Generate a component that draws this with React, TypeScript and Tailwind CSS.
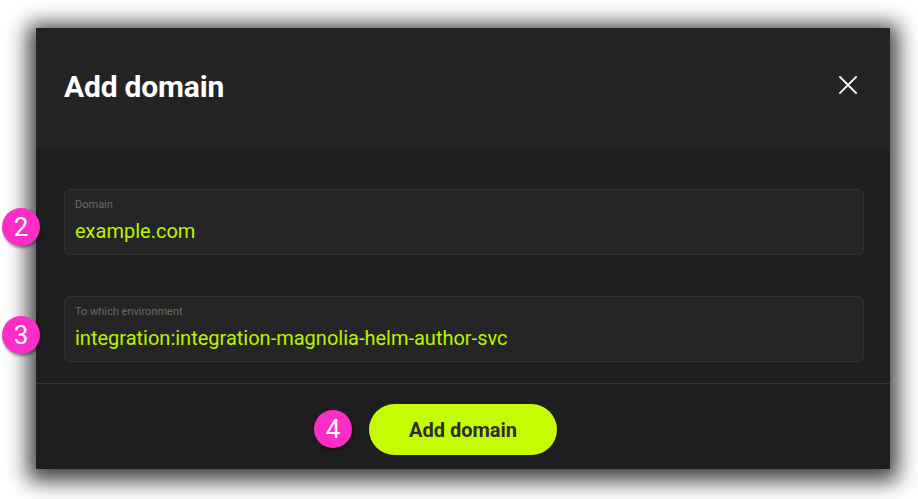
import React from "react";

function Badge({ n, className }: { n: string; className: string }) {
  return (
    <div
      className={`absolute flex h-[38px] w-[38px] items-center justify-center rounded-full bg-[#fb2fc8] text-[26px] leading-none text-white shadow-[1px_2px_3px_rgba(0,0,0,0.45)] ${className}`}
      style={{ fontFamily: "Roboto, sans-serif" }}
    >
      {n}
    </div>
  );
}

function Field({ label, value }: { label: string; value: string }) {
  return (
    <div className="flex h-[66px] w-[800px] flex-col rounded-[6px] border border-[#333335] bg-[#252526] px-[10px] pt-[8px]">
      <div className="text-[11px] leading-[14px] text-[#6a6a6a]">{label}</div>
      <div className="mt-[8px] text-[20px] leading-[23px] text-[#b9f400]">{value}</div>
    </div>
  );
}

export default function App() {
  return (
    <div
      className="relative h-[499px] w-[918px] overflow-hidden bg-white"
      style={{ fontFamily: "Roboto, 'Liberation Sans', sans-serif" }}
    >
      <div className="ml-[36px] mt-[28px] flex h-[441px] w-[854px] flex-col bg-[#1e1e20] shadow-[0_4px_20px_8px_rgba(0,0,0,0.75)]">
        <div className="flex h-[120px] items-center justify-between bg-[#242424] pl-[28px] pr-[32px]">
          <h1 className="pb-[4px] text-[30px] font-bold tracking-[-0.2px] text-white">Add domain</h1>
          <svg width="20" height="20" viewBox="0 0 20 20" className="mb-[6px]">
            <path d="M2 2 L18 18 M18 2 L2 18" stroke="#ffffff" strokeWidth="1.8" strokeLinecap="square" />
          </svg>
        </div>
        <div className="flex flex-col px-[28px] pt-[41px]">
          <Field label="Domain" value="example.com" />
          <div className="mt-[41px]">
            <Field label="To which environment" value="integration:integration-magnolia-helm-author-svc" />
          </div>
        </div>
        <div className="mt-[21px] h-px bg-[#343436]" />
        <div className="flex justify-center pt-[20px]">
          <button className="h-[51px] w-[188px] rounded-full bg-[#c4fc00] text-[20px] font-bold text-[#2d2b2b]">
            Add domain
          </button>
        </div>
      </div>
      <Badge n="2" className="left-[2px] top-[208px]" />
      <Badge n="3" className="left-[2px] top-[316px]" />
      <Badge n="4" className="left-[314px] top-[410px]" />
    </div>
  );
}
